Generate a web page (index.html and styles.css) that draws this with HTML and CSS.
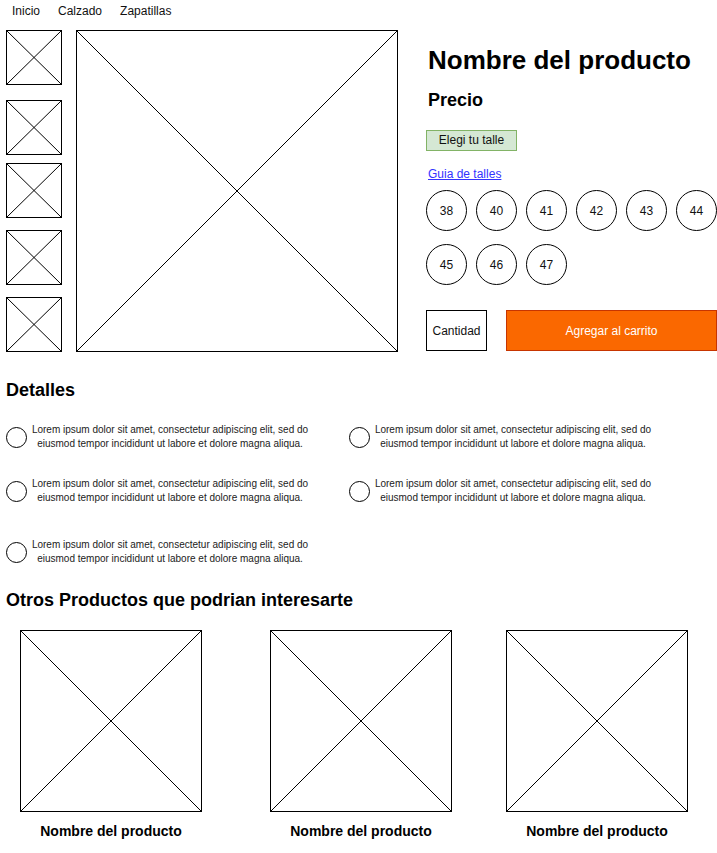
FILE: index.html
```html
<!DOCTYPE html>
<html lang="es">
<head>
  <meta charset="UTF-8">
  <meta name="viewport" content="width=device-width, initial-scale=1.0">
  <title>Producto - Zapatillas</title>
  <link rel="stylesheet" href="styles.css">
</head>
<body>
  <nav class="breadcrumb">
    <span>Inicio</span>
    <span>Calzado</span>
    <span>Zapatillas</span>
  </nav>

  <section class="product">
    <div class="thumbs">
      <div class="ph thumb"><svg viewBox="0 0 100 100" preserveAspectRatio="none"><line x1="0" y1="0" x2="100" y2="100"/><line x1="100" y1="0" x2="0" y2="100"/></svg></div>
      <div class="ph thumb"><svg viewBox="0 0 100 100" preserveAspectRatio="none"><line x1="0" y1="0" x2="100" y2="100"/><line x1="100" y1="0" x2="0" y2="100"/></svg></div>
      <div class="ph thumb"><svg viewBox="0 0 100 100" preserveAspectRatio="none"><line x1="0" y1="0" x2="100" y2="100"/><line x1="100" y1="0" x2="0" y2="100"/></svg></div>
      <div class="ph thumb"><svg viewBox="0 0 100 100" preserveAspectRatio="none"><line x1="0" y1="0" x2="100" y2="100"/><line x1="100" y1="0" x2="0" y2="100"/></svg></div>
      <div class="ph thumb"><svg viewBox="0 0 100 100" preserveAspectRatio="none"><line x1="0" y1="0" x2="100" y2="100"/><line x1="100" y1="0" x2="0" y2="100"/></svg></div>
    </div>

    <div class="ph main-image"><svg viewBox="0 0 100 100" preserveAspectRatio="none"><line x1="0" y1="0" x2="100" y2="100"/><line x1="100" y1="0" x2="0" y2="100"/></svg></div>

    <div class="info">
      <h1 class="title">Nombre del producto</h1>
      <h2 class="price">Precio</h2>
      <div class="size-label">Elegi tu talle</div>
      <a href="#" class="size-guide">Guia de talles</a>
      <div class="sizes">
        <button class="size">38</button>
        <button class="size">40</button>
        <button class="size">41</button>
        <button class="size">42</button>
        <button class="size">43</button>
        <button class="size">44</button>
        <button class="size">45</button>
        <button class="size">46</button>
        <button class="size">47</button>
      </div>
      <div class="buy">
        <div class="qty">Cantidad</div>
        <button class="add-cart">Agregar al carrito</button>
      </div>
    </div>
  </section>

  <section class="details">
    <h3 class="section-title">Detalles</h3>
    <div class="detail-grid">
      <div class="detail">
        <span class="dot"></span>
        <p>Lorem ipsum dolor sit amet, consectetur adipiscing elit, sed do<br>eiusmod tempor incididunt ut labore et dolore magna aliqua.</p>
      </div>
      <div class="detail">
        <span class="dot"></span>
        <p>Lorem ipsum dolor sit amet, consectetur adipiscing elit, sed do<br>eiusmod tempor incididunt ut labore et dolore magna aliqua.</p>
      </div>
      <div class="detail">
        <span class="dot"></span>
        <p>Lorem ipsum dolor sit amet, consectetur adipiscing elit, sed do<br>eiusmod tempor incididunt ut labore et dolore magna aliqua.</p>
      </div>
      <div class="detail">
        <span class="dot"></span>
        <p>Lorem ipsum dolor sit amet, consectetur adipiscing elit, sed do<br>eiusmod tempor incididunt ut labore et dolore magna aliqua.</p>
      </div>
      <div class="detail">
        <span class="dot"></span>
        <p>Lorem ipsum dolor sit amet, consectetur adipiscing elit, sed do<br>eiusmod tempor incididunt ut labore et dolore magna aliqua.</p>
      </div>
    </div>
  </section>

  <section class="related">
    <h3 class="section-title">Otros Productos que podrian interesarte</h3>
    <div class="related-grid">
      <div class="card">
        <div class="ph card-image"><svg viewBox="0 0 100 100" preserveAspectRatio="none"><line x1="0" y1="0" x2="100" y2="100"/><line x1="100" y1="0" x2="0" y2="100"/></svg></div>
        <div class="card-name">Nombre del producto</div>
      </div>
      <div class="card">
        <div class="ph card-image"><svg viewBox="0 0 100 100" preserveAspectRatio="none"><line x1="0" y1="0" x2="100" y2="100"/><line x1="100" y1="0" x2="0" y2="100"/></svg></div>
        <div class="card-name">Nombre del producto</div>
      </div>
      <div class="card">
        <div class="ph card-image"><svg viewBox="0 0 100 100" preserveAspectRatio="none"><line x1="0" y1="0" x2="100" y2="100"/><line x1="100" y1="0" x2="0" y2="100"/></svg></div>
        <div class="card-name">Nombre del producto</div>
      </div>
    </div>
  </section>
</body>
</html>
```

FILE: styles.css
```css
body {
  font-family: "Liberation Sans", Arial, sans-serif;
  font-size: 12px;
  color: #111;
  background-color: #fff;
  margin: 0;
  overflow: hidden;
}
.breadcrumb {
  display: flex;
  gap: 18px;
  height: 21px;
  align-items: center;
  padding-left: 12px;
}

/* placeholder boxes with an X */
.ph {
  box-sizing: border-box;
  border: 1px solid #000;
  background-color: #fff;
}
.ph svg {
  display: block;
  width: 100%;
  height: 100%;
}
.ph line {
  stroke: #000;
  stroke-width: 1;
  vector-effect: non-scaling-stroke;
}

.product {
  display: flex;
  align-items: flex-start;
  padding: 9px 0 0 6px;
}
.thumbs {
  display: flex;
  flex-direction: column;
}
.thumb {
  width: 56px;
  height: 55px;
}
.thumb + .thumb {
  margin-top: 12px;
}
.thumb:nth-child(2) {
  margin-top: 15px;
}
.thumb:nth-child(3) {
  margin-top: 8px;
}
.main-image {
  width: 322px;
  height: 322px;
  margin-left: 14px;
}
.info {
  display: flex;
  flex-direction: column;
  align-items: flex-start;
  margin-left: 28px;
  width: 291px;
}
.title {
  font-size: 26px;
  line-height: 30px;
  font-weight: bold;
  margin: 15px 0 0 2px;
  color: #000;
}
.price {
  font-size: 18px;
  line-height: 22px;
  font-weight: bold;
  margin: 14px 0 0 2px;
  color: #000;
}
.size-label {
  box-sizing: border-box;
  width: 91px;
  height: 21px;
  line-height: 19px;
  text-align: center;
  background-color: #d5e8d4;
  border: 1px solid #82b366;
  margin-top: 19px;
}
.size-guide {
  color: #3333ff;
  line-height: 14px;
  margin: 16px 0 0 2px;
}
.sizes {
  display: flex;
  flex-wrap: wrap;
  column-gap: 9px;
  row-gap: 13px;
  margin-top: 9px;
}
.size {
  box-sizing: border-box;
  width: 41px;
  height: 41px;
  border: 1px solid #000;
  border-radius: 50%;
  background: #fff;
  font-family: inherit;
  font-size: 12px;
  color: #111;
  padding: 0;
}
.buy {
  display: flex;
  gap: 19px;
  margin-top: 25px;
  width: 100%;
}
.qty {
  box-sizing: border-box;
  width: 61px;
  height: 41px;
  border: 1px solid #000;
  display: flex;
  align-items: center;
  justify-content: center;
}
.add-cart {
  box-sizing: border-box;
  flex: 1;
  height: 41px;
  background-color: #fa6800;
  border: 1px solid #c73500;
  color: #fff;
  font-family: inherit;
  font-size: 12px;
  padding: 0;
}

.section-title {
  font-size: 18px;
  line-height: 22px;
  font-weight: bold;
  color: #000;
  margin: 0;
  padding-left: 6px;
}
.details {
  margin-top: 27px;
}
.detail-grid {
  display: grid;
  grid-template-columns: 343px auto;
  row-gap: 26px;
  margin-top: 22px;
  padding-left: 6px;
}
.detail:nth-child(5) {
  margin-top: 7px;
}
.detail {
  display: flex;
  align-items: center;
  gap: 3px;
}
.dot {
  box-sizing: border-box;
  width: 21px;
  height: 21px;
  border: 1px solid #000;
  border-radius: 50%;
  flex-shrink: 0;
}
.detail p {
  margin: 0;
  width: 280px;
  font-size: 10px;
  line-height: 14px;
  text-align: center;
  white-space: nowrap;
  color: #222;
}

.related {
  margin-top: 23px;
}
.related-grid {
  display: grid;
  grid-template-columns: 250px 236px 182px;
  padding-left: 20px;
  margin-top: 19px;
}
.card {
  width: 182px;
}
.card-image {
  width: 182px;
  height: 182px;
}
.card-name {
  margin-top: 10px;
  font-size: 14px;
  line-height: 18px;
  font-weight: bold;
  text-align: center;
  color: #000;
}
```
